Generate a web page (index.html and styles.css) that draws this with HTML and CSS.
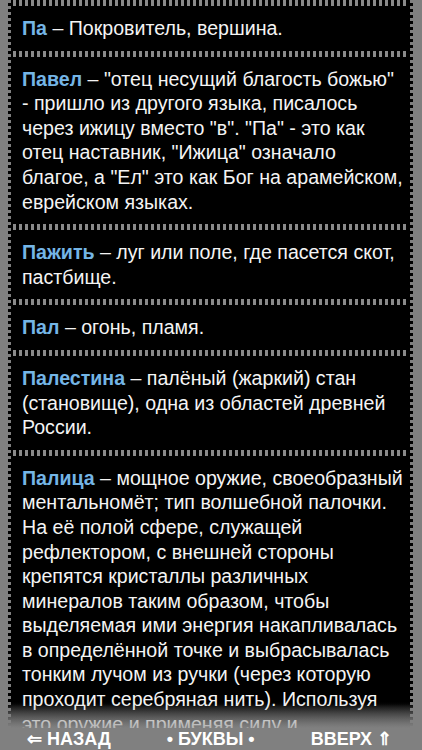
FILE: index.html
```html
<!DOCTYPE html>
<html lang="ru">
<head>
<meta charset="utf-8">
<link rel="stylesheet" href="styles.css">
</head>
<body>
<div class="panel">
  <div class="sep"></div>
  <div class="card"><span class="term">Па</span> – Покровитель, вершина.</div>
  <div class="sep"></div>
  <div class="card"><span class="term">Павел</span> – "отец несущий благость божью" <span class="nw">- пришло</span> из другого языка, писалось через ижицу вместо "в". "Па" - это как отец наставник, "Ижица" означало благое, а "Ел" это как Бог на арамейском, еврейском языках.</div>
  <div class="sep"></div>
  <div class="card"><span class="term">Пажить</span> – луг или поле, где пасется скот, пастбище.</div>
  <div class="sep"></div>
  <div class="card"><span class="term">Пал</span> – огонь, пламя.</div>
  <div class="sep"></div>
  <div class="card"><span class="term">Палестина</span> – палёный (жаркий) стан (становище), одна из областей древней России.</div>
  <div class="sep"></div>
  <div class="card"><span class="term">Палица</span> – мощное оружие, своеобразный ментальномёт; тип волшебной палочки. На её полой сфере, служащей рефлектором, с внешней стороны крепятся кристаллы различных минералов таким образом, чтобы выделяемая ими энергия накапливалась в определённой точке и выбрасывалась тонким лучом из ручки (через которую проходит серебряная нить). Используя это оружие и применяя силу и</div>
  <div class="fade"></div>
</div>
<div class="toolbar">
  <span class="tb-item">⇐ НАЗАД</span>
  <span class="tb-item">• БУКВЫ •</span>
  <span class="tb-item">ВВЕРХ ⇑</span>
</div>
</body>
</html>
```
FILE: styles.css
```css
html, body {
  margin: 0;
  padding: 0;
}
body {
  width: 422px;
  height: 750px;
  background: #808080;
  display: flex;
  flex-direction: column;
  overflow: hidden;
  font-family: "Liberation Sans", Arial, sans-serif;
}
.panel {
  flex: 1;
  min-height: 0;
  margin: 0 9px 0 8px;
  background: linear-gradient(to bottom, #000 0, #000 calc(100% - 24px), #808080 100%);
  position: relative;
  overflow: hidden;
  padding: 0 3px;
}
.panel::before,
.panel::after {
  content: "";
  position: absolute;
  top: 0;
  bottom: 0;
  width: 3px;
  background: repeating-linear-gradient(to bottom, #808080 0, #808080 3px, transparent 3px, transparent 6px);
}
.panel::before { left: 0; }
.panel::after { right: 0; }
.sep {
  height: 6px;
  margin: 0 2px;
  background: repeating-linear-gradient(to right, #8a8a8a 0, #8a8a8a 3px, transparent 3px, transparent 6px);
}
.card {
  padding: 10px 3px 10px 11px;
  color: #f4f4f4;
  font-size: 19.6px;
  line-height: 24.6px;
}
.term {
  color: #74b5e6;
  font-weight: bold;
}
.nw { white-space: nowrap; }
.fade {
  position: absolute;
  left: 0;
  right: 0;
  bottom: 0;
  height: 26px;
  background: linear-gradient(to bottom, rgba(128,128,128,0), rgba(128,128,128,0.55));
}
.toolbar {
  height: 22px;
  flex: none;
  display: flex;
  justify-content: space-between;
  align-items: center;
  padding: 0 30px 0 27px;
  color: #ffffff;
  font-weight: bold;
  font-size: 18px;
  line-height: 20px;
}
.tb-item { white-space: nowrap; }
```
